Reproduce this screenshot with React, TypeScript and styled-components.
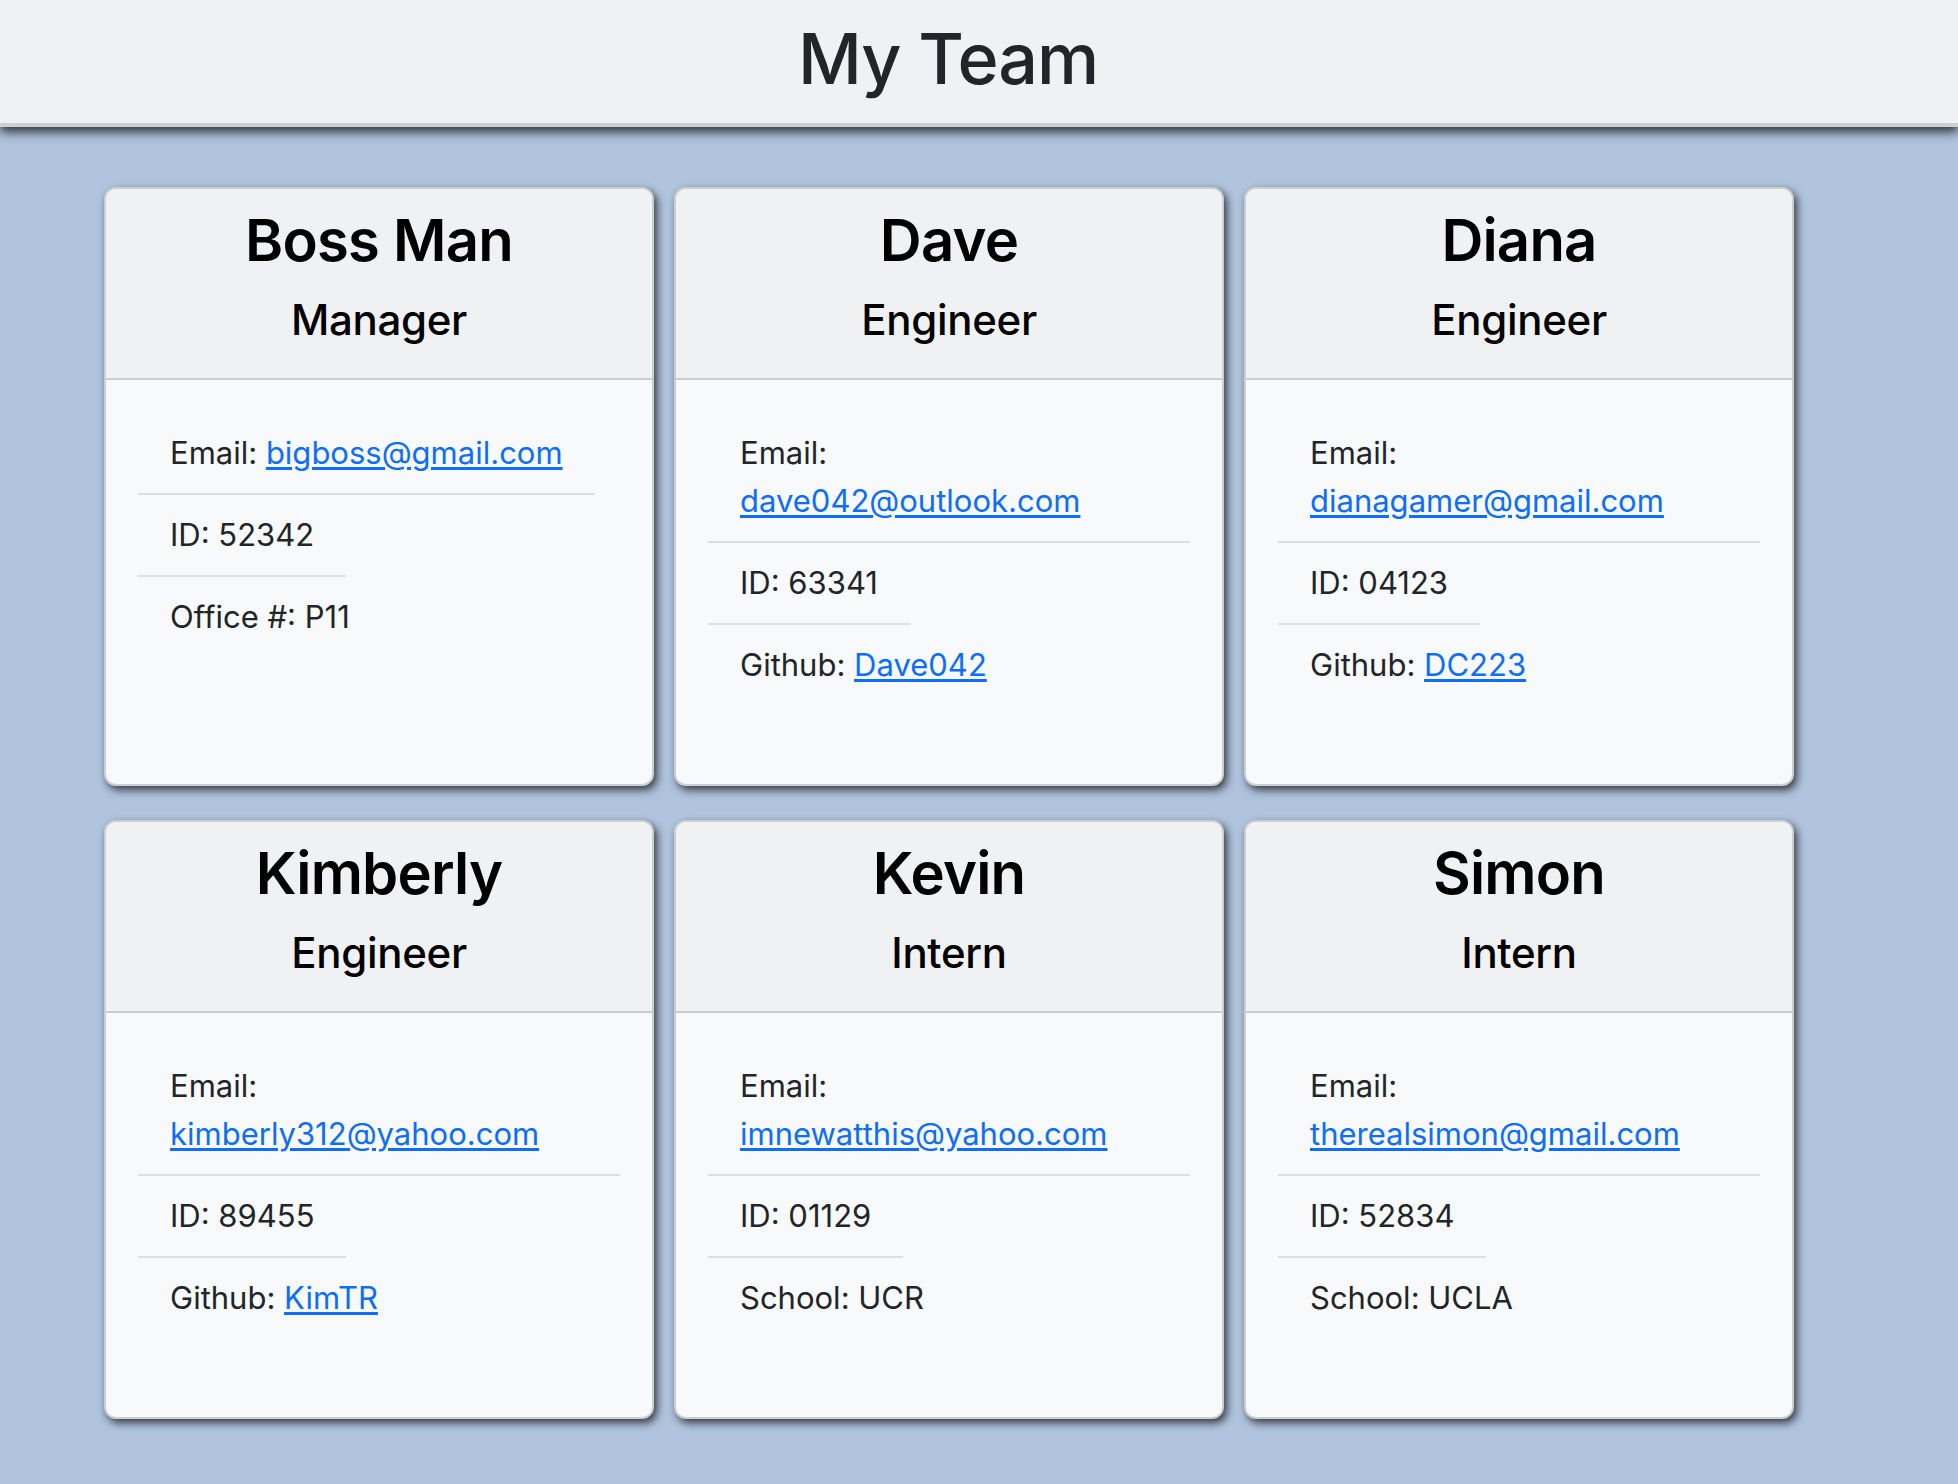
import React from 'react'
import styled, { createGlobalStyle } from 'styled-components'

type Member = {
  name: string
  role: string
  email: string
  id: string
  extraLabel: string
  extraValue: string
  extraLink?: boolean
}

const team: Member[] = [
  { name: 'Boss Man', role: 'Manager', email: 'bigboss@gmail.com', id: '52342', extraLabel: 'Office #', extraValue: 'P11' },
  { name: 'Dave', role: 'Engineer', email: 'dave042@outlook.com', id: '63341', extraLabel: 'Github', extraValue: 'Dave042', extraLink: true },
  { name: 'Diana', role: 'Engineer', email: 'dianagamer@gmail.com', id: '04123', extraLabel: 'Github', extraValue: 'DC223', extraLink: true },
  { name: 'Kimberly', role: 'Engineer', email: 'kimberly312@yahoo.com', id: '89455', extraLabel: 'Github', extraValue: 'KimTR', extraLink: true },
  { name: 'Kevin', role: 'Intern', email: 'imnewatthis@yahoo.com', id: '01129', extraLabel: 'School', extraValue: 'UCR' },
  { name: 'Simon', role: 'Intern', email: 'therealsimon@gmail.com', id: '52834', extraLabel: 'School', extraValue: 'UCLA' }
]

const GlobalStyle = createGlobalStyle`
  html, body {
    margin: 0;
    padding: 0;
  }

  body {
    min-height: 1484px;
    background-color: #b0c4de;
    font-family: Inter, "Noto Sans", "Liberation Sans", sans-serif;
    color: #212529;
  }
`

export default function App (): JSX.Element {
  return <>
    <GlobalStyle />
    <Header>
      <HeaderTitle>My Team</HeaderTitle>
    </Header>

    <CardGrid>
      {team.map(member =>
        <Card key={member.name}>
          <CardHeader>
            <CardName>{member.name}</CardName>
            <CardRole>{member.role}</CardRole>
          </CardHeader>
          <CardBody>
            <InfoList>
              <InfoItem>Email: <InfoLink href={`mailto:${member.email}`}>{member.email}</InfoLink></InfoItem>
              <InfoItem>ID: {member.id}</InfoItem>
              <InfoItem>
                {member.extraLabel}: {member.extraLink
                  ? <InfoLink href={`https://github.com/${member.extraValue}`}>{member.extraValue}</InfoLink>
                  : member.extraValue}
              </InfoItem>
            </InfoList>
          </CardBody>
        </Card>
      )}
    </CardGrid>
  </>
}

const Header = styled.header`
  height: 123px;
  padding-right: 62px;

  display: flex;
  justify-content: center;
  align-items: center;

  background-color: #f0f1f2;
  border-bottom: 4px solid #cfd0d2;
  box-shadow: 0 5px 10px rgba(0, 0, 0, 0.75);
`

const HeaderTitle = styled.h1`
  margin: 0 0 6px 0;

  font-size: 70px;
  font-weight: 500;
  line-height: 1.2;
  letter-spacing: -1px;

  color: #212529;
`

const CardGrid = styled.main`
  padding: 60px 0 64px 104px;

  display: grid;
  grid-template-columns: repeat(3, 550px);
  column-gap: 20px;
  row-gap: 34px;
`

const Card = styled.section`
  height: 599px;
  box-sizing: border-box;

  display: flex;
  flex-direction: column;

  overflow: hidden;

  background-color: #f8f9fa;
  border: 2px solid #cdced0;
  border-radius: 12px;
  box-shadow: 3px 4px 8px rgba(0, 0, 0, 0.7);
`

const CardHeader = styled.div`
  padding: 17px 32px 15px 32px;

  text-align: center;

  background-color: #f0f1f2;
  border-bottom: 2px solid #cbcccd;
`

const CardName = styled.h2`
  margin: 0 0 19px 0;

  font-size: 58px;
  font-weight: 600;
  line-height: 1.2;
  letter-spacing: -0.8px;

  color: #000;
`

const CardRole = styled.h4`
  margin: 0 0 18px 0;

  font-size: 42px;
  font-weight: 500;
  line-height: 1.2;
  letter-spacing: -0.3px;

  color: #000;
`

const CardBody = styled.div`
  padding: 33px 32px;
`

const InfoList = styled.ul`
  margin: 0;
  padding: 0;

  display: flex;
  flex-direction: column;
  align-items: flex-start;

  list-style: none;
`

const InfoItem = styled.li`
  padding: 16px 32px;

  font-size: 31px;
  line-height: 48px;

  color: #212529;
  border-bottom: 2px solid #dcdee0;

  &:last-child {
    border-bottom: none;
  }
`

const InfoLink = styled.a`
  color: #0d6efd;
  text-decoration: underline;
  text-underline-offset: 3px;
`
